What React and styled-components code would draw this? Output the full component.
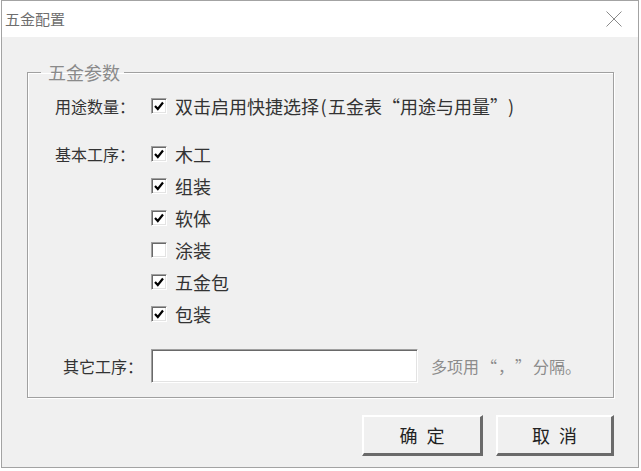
import styled, { createGlobalStyle } from "styled-components";

const GlobalStyle = createGlobalStyle`
  html, body {
    margin: 0;
    padding: 0;
    background: #ffffff;
  }
  body {
    font-family: "Noto Sans CJK SC", "Noto Sans", sans-serif;
  }
`;

const Window = styled.div`
  box-sizing: border-box;
  width: 638px;
  height: 468px;
  margin-left: 1px;
  border: 1px solid #a3a3a3;
  background: #f0f0f0;
  display: flex;
  flex-direction: column;
`;

const TitleBar = styled.div`
  height: 36px;
  background: #ffffff;
  display: flex;
  align-items: center;
  justify-content: space-between;
  padding: 0 16px 0 3px;
`;

const Title = styled.div`
  font-size: 15px;
  line-height: 36px;
  color: #6e6e6e;
`;

const Body = styled.div`
  padding: 0 24px 0 25px;
  display: flex;
  flex-direction: column;
`;

const Group = styled.fieldset`
  margin: 25px 0 0 0;
  padding: 8px 0 14px 27px;
  border: 1px solid #a0a0a0;
  box-shadow: 1px 1px 0 #ffffff, inset 1px 1px 0 #ffffff;
  min-width: 0;
`;

const Legend = styled.legend`
  margin-left: -14px;
  padding: 0 4px 0 7px;
  font-size: 18px;
  line-height: 20px;
  color: #8a8a8a;
`;

const Form = styled.div`
  display: grid;
  grid-template-columns: 96px 1fr;
  align-items: ${(p) => p.align || "start"};
  margin-top: ${(p) => p.top || 0}px;
`;

const Label = styled.div`
  font-size: 16px;
  line-height: 32px;
  color: #333333;
  white-space: nowrap;
`;

const Stack = styled.div`
  display: flex;
  flex-direction: column;
`;

const CheckRow = styled.label`
  display: flex;
  align-items: center;
  height: 32px;
  gap: 8px;
  font-size: 18px;
  color: #333333;
  white-space: nowrap;
`;

const Box = styled.span`
  box-sizing: border-box;
  width: 16px;
  height: 16px;
  background: #ffffff;
  border-top: 1px solid #a0a0a0;
  border-left: 1px solid #a0a0a0;
  border-bottom: 1px solid #ffffff;
  border-right: 1px solid #ffffff;
  box-shadow: inset 1px 1px 0 #696969, inset -1px -1px 0 #e3e3e3;
  display: flex;
  align-items: center;
  justify-content: center;
  flex-shrink: 0;
`;

// fixed cell for punctuation so it takes the reference's width
const Q = styled.span`
  display: inline-block;
  width: ${(p) => p.w || 16}px;
  text-align: ${(p) => p.side || "center"};
`;

const OtherRow = styled.div`
  display: flex;
  align-items: center;
`;

const TextInput = styled.div`
  box-sizing: border-box;
  width: 267px;
  height: 34px;
  flex-shrink: 0;
  background: #ffffff;
  border-top: 1px solid #a0a0a0;
  border-left: 1px solid #a0a0a0;
  border-bottom: 1px solid #ffffff;
  border-right: 1px solid #ffffff;
  box-shadow: inset 1px 1px 0 #696969, inset -1px -1px 0 #e3e3e3;
`;

const Hint = styled.span`
  margin-left: 13px;
  font-size: 16px;
  color: #8c8c8c;
  white-space: nowrap;
`;

const Buttons = styled.div`
  display: flex;
  justify-content: flex-end;
  gap: 13px;
  margin-top: 17px;
`;

const Button = styled.button`
  box-sizing: border-box;
  width: ${(p) => p.w}px;
  height: 41px;
  background: #f0f0f0;
  border-top: 2px solid #ffffff;
  border-left: 2px solid #ffffff;
  border-bottom: 3px solid #6a6a6a;
  border-right: 3px solid #6a6a6a;
  font-family: "Noto Sans CJK SC", sans-serif;
  font-size: 18px;
  color: #222222;
  letter-spacing: 9px;
  padding: 0 0 0 9px;
`;

const Check = () => (
  <svg width="10" height="10" viewBox="0 0 10 10">
    <path d="M1 5 L3.8 8 L9 1.5" fill="none" stroke="#000" strokeWidth="2.2" />
  </svg>
);

const Close = () => (
  <svg width="16" height="16" viewBox="0 0 16 16">
    <path d="M0.5 0.5 L15.5 15.5 M15.5 0.5 L0.5 15.5" stroke="#8a8a8a" strokeWidth="1" />
  </svg>
);

const CheckItem = ({ checked, children }) => (
  <CheckRow>
    <Box>{checked && <Check />}</Box>
    <span>{children}</span>
  </CheckRow>
);

const steps = [
  { name: "木工", on: true },
  { name: "组装", on: true },
  { name: "软体", on: true },
  { name: "涂装", on: false },
  { name: "五金包", on: true },
  { name: "包装", on: true },
];

export default function App() {
  return (
    <>
      <GlobalStyle />
      <Window lang="zh-CN">
        <TitleBar>
          <Title>五金配置</Title>
          <Close />
        </TitleBar>
        <Body>
          <Group>
            <Legend>五金参数</Legend>
            <Form>
              <Label>用途数量：</Label>
              <CheckItem checked>
                双击启用快捷选择<Q w={9}>(</Q>五金表<Q w={18} side="right">“</Q>用途与用量
                <Q w={18} side="left">”</Q>
                <Q w={6}>)</Q>
              </CheckItem>
            </Form>
            <Form top={16}>
              <Label>基本工序：</Label>
              <Stack>
                {steps.map((s) => (
                  <CheckItem key={s.name} checked={s.on}>
                    {s.name}
                  </CheckItem>
                ))}
              </Stack>
            </Form>
            <Form align="center" top={19}>
              <Label>其它工序：</Label>
              <OtherRow>
                <TextInput />
                <Hint>
                  多项用<Q w={18} side="right">“</Q>
                  <Q w={18}>，</Q>
                  <Q w={18} side="left">”</Q>分隔。
                </Hint>
              </OtherRow>
            </Form>
          </Group>
          <Buttons>
            <Button w={121}>确定</Button>
            <Button w={118}>取消</Button>
          </Buttons>
        </Body>
      </Window>
    </>
  );
}
